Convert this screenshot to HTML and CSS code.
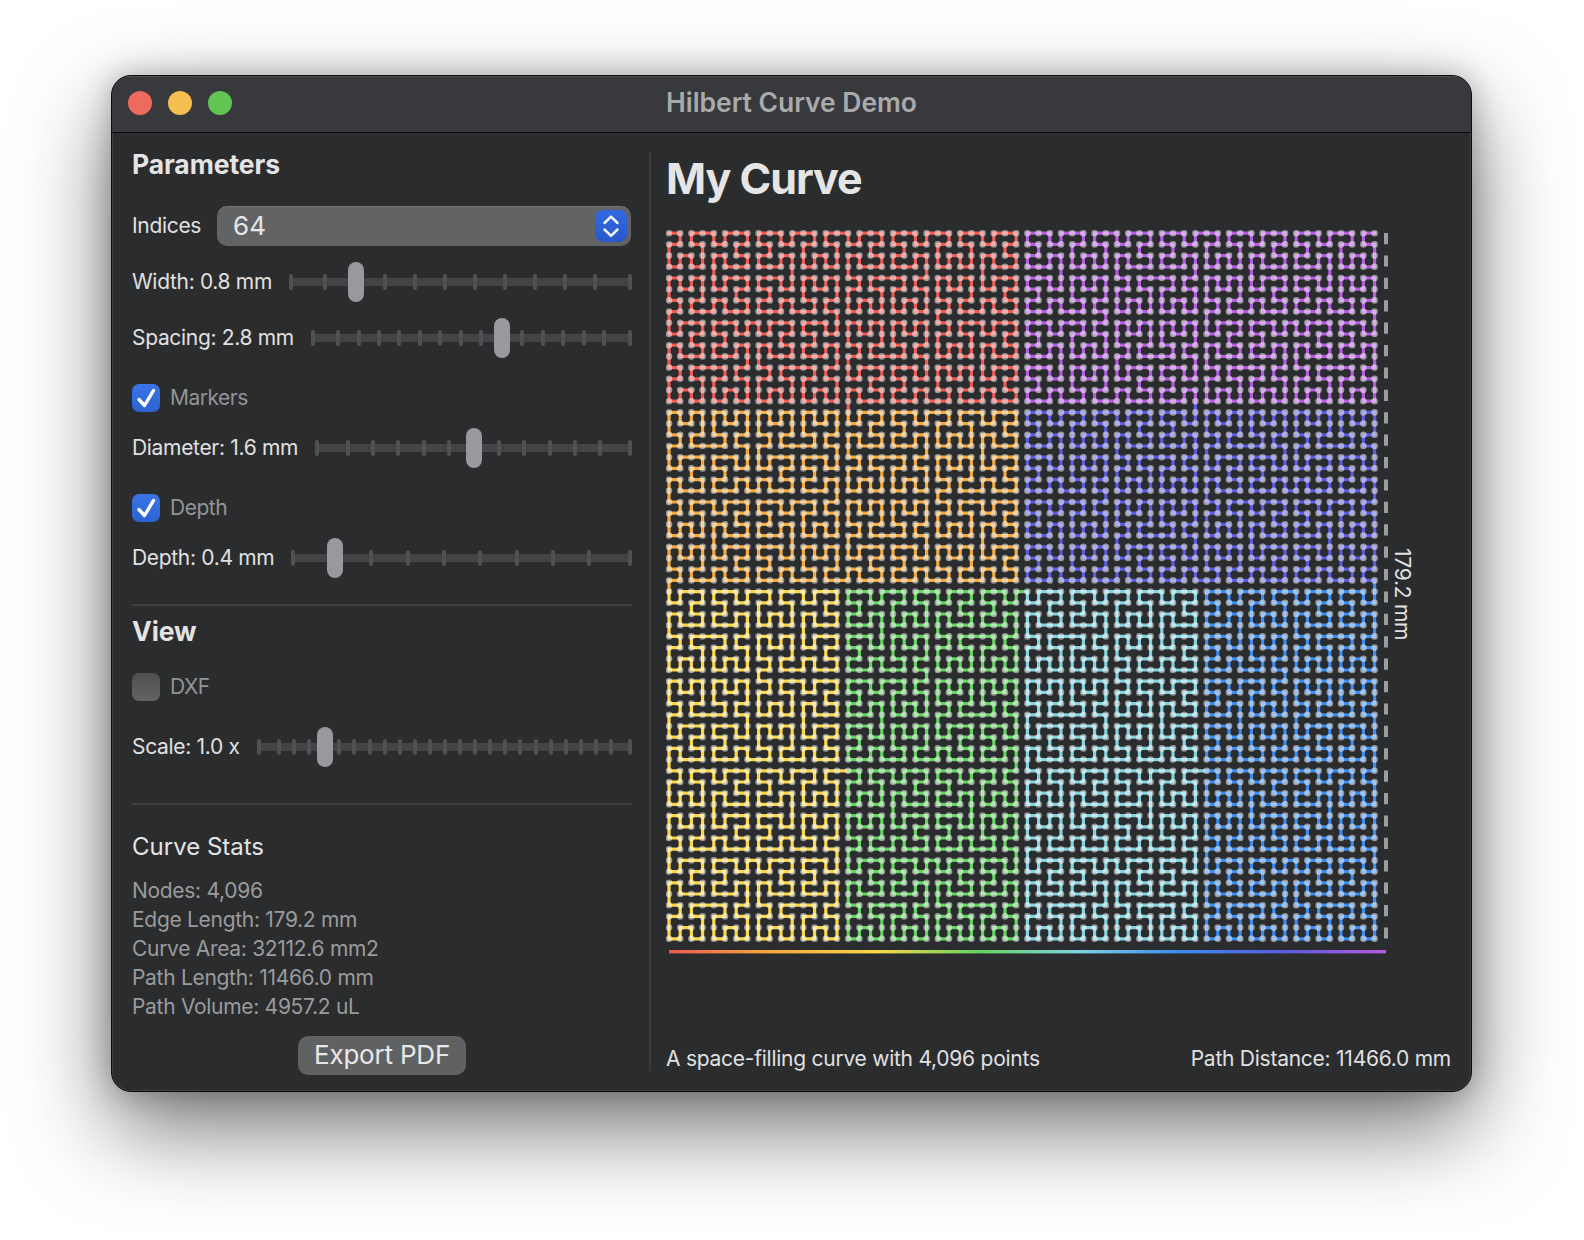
FILE: index.html
```html
<!DOCTYPE html>
<html lang="en">
<head>
<meta charset="utf-8">
<title>Hilbert Curve Demo</title>
<link rel="stylesheet" href="styles.css">
</head>
<body>
<main class="window">
  <header class="titlebar">
    <div class="lights"><span class="light red"></span><span class="light yellow"></span><span class="light green"></span></div>
    <h1 class="wintitle">Hilbert Curve Demo</h1>
  </header>
  <div class="body">
    <aside class="panel">
      <h2 class="heading">Parameters</h2>
      <div class="row select-row">
        <span class="label">Indices</span>
        <div class="select"><span class="select-value">64</span>
          <span class="stepper"><svg width="20" height="28" viewBox="0 0 20 28"><path d="M3.5 11 10 4.7 16.5 11M3.5 17.5 10 23.8 16.5 17.5" fill="none" stroke="#f2f5fd" stroke-width="2.5" stroke-linecap="round" stroke-linejoin="round"/></svg></span>
        </div>
      </div>
      <div class="row gap16"><span class="label">Width: 0.8 mm</span><div class="slider" data-first="305" data-step="30" data-n="10" data-thumb="268"></div></div>
      <div class="row gap16"><span class="label">Spacing: 2.8 mm</span><div class="slider" data-first="292" data-step="20.46" data-n="14" data-thumb="122"></div></div>
      <label class="check gap26"><span class="box on"><svg width="28" height="28" viewBox="0 0 28 28"><path d="M7 15.5 12.5 21.5 21.5 6.5" fill="none" stroke="#fff" stroke-width="3.4" stroke-linecap="round" stroke-linejoin="round"/></svg></span><span class="check-text">Markers</span></label>
      <div class="row gap16"><span class="label">Diameter: 1.6 mm</span><div class="slider" data-first="282" data-step="25.2" data-n="11" data-thumb="150"></div></div>
      <label class="check gap26"><span class="box on"><svg width="28" height="28" viewBox="0 0 28 28"><path d="M7 15.5 12.5 21.5 21.5 6.5" fill="none" stroke="#fff" stroke-width="3.4" stroke-linecap="round" stroke-linejoin="round"/></svg></span><span class="check-text">Depth</span></label>
      <div class="row gap16"><span class="label">Depth: 0.4 mm</span><div class="slider" data-first="295" data-step="36.3" data-n="8" data-thumb="289"></div></div>
      <hr class="rule rule-a">
      <h2 class="heading view-heading">View</h2>
      <label class="check gap25"><span class="box"></span><span class="check-text">DXF</span></label>
      <div class="row gap26b"><span class="label">Scale: 1.0 x</span><div class="slider" data-first="351" data-step="15.09" data-n="23" data-thumb="299"></div></div>
      <hr class="rule rule-b">
      <h3 class="subheading">Curve Stats</h3>
      <ul class="stats">
        <li>Nodes: 4,096</li>
        <li>Edge Length: 179.2 mm</li>
        <li>Curve Area: 32112.6 mm2</li>
        <li>Path Length: 11466.0 mm</li>
        <li>Path Volume: 4957.2 uL</li>
      </ul>
      <button class="export" type="button">Export PDF</button>
    </aside>
    <div class="vdivider"></div>
    <section class="content">
      <h2 class="curve-title">My Curve</h2>
      <div class="plot">
        <svg id="curve" class="curve" width="730" height="736" viewBox="0 0 730 736" aria-label="Hilbert curve">
          <defs>
            <linearGradient id="rainbow" x1="0" x2="1" y1="0" y2="0">
              <stop offset="0" stop-color="#ee5a52"/>
              <stop offset=".14" stop-color="#f5a93d"/>
              <stop offset=".29" stop-color="#fdd648"/>
              <stop offset=".43" stop-color="#63d45f"/>
              <stop offset=".57" stop-color="#7fd4e0"/>
              <stop offset=".71" stop-color="#3b8bf0"/>
              <stop offset=".86" stop-color="#5b5bdf"/>
              <stop offset="1" stop-color="#b45be0"/>
            </linearGradient>
          </defs>
          <line class="dash" x1="720" y1="8" x2="720" y2="722"/>
          <rect x="3" y="725" width="717" height="3.4" fill="url(#rainbow)"/>
        </svg>
        <span class="edge-label">179.2 mm</span>
      </div>
      <footer class="foot"><span>A space-filling curve with 4,096 points</span><span>Path Distance: 11466.0 mm</span></footer>
    </section>
  </div>
</main>
<script src="app.js"></script>
</body>
</html>
```
FILE: styles.css
```css
* { box-sizing: border-box; }
html, body { margin: 0; height: 100%; }
body {
  background: #fff;
  padding: 75px 0 0 111px;
  font-family: Inter, "Noto Sans", "Liberation Sans", sans-serif;
  font-size: 21px;
  color: #e2e2e3;
  overflow: hidden;
}
h1, h2, h3, ul { margin: 0; padding: 0; }
.window {
  width: 1361px;
  height: 1017px;
  border: 1px solid #0c0c0d;
  border-radius: 20px;
  background: #2b2c2e;
  box-shadow: inset 0 0 0 1px rgba(255,255,255,.1), 0 36px 90px rgba(0,0,0,.55), 0 0 30px rgba(0,0,0,.25);
  display: flex;
  flex-direction: column;
  overflow: hidden;
}
.titlebar {
  position: relative;
  height: 57px;
  flex: none;
  background: #38393c;
  border-bottom: 1px solid #0c0c0d;
  display: flex;
  align-items: center;
  justify-content: center;
  box-shadow: inset 0 1px 0 rgba(255,255,255,.12);
}
.lights { position: absolute; left: 16px; top: 15px; display: flex; gap: 16px; }
.light { width: 24px; height: 24px; border-radius: 50%; }
.red { background: #ec6a5e; }
.yellow { background: #f4bf4f; }
.green { background: #61c554; }
.wintitle { font-size: 26.5px; font-weight: 600; color: #a9aaac; letter-spacing: -.05px; line-height: 32px; padding-bottom: 4px; }
.body { flex: 1; display: flex; min-height: 0; }
.panel {
  width: 537px;
  flex: none;
  padding: 16px 17px 0 20px;
  display: flex;
  flex-direction: column;
}
.heading { font-size: 26.5px; font-weight: 700; line-height: 31px; color: #e4e4e5; letter-spacing: -.1px; }
.row { display: flex; align-items: center; height: 40px; gap: 17px; }
.select-row { margin-top: 26px; gap: 16px; }
.gap16 { margin-top: 16px; }
.gap26 { margin-top: 26px; }
.gap25 { margin-top: 26px; }
.gap26b { margin-top: 26px; }
.label { white-space: nowrap; color: #e0e0e1; flex: none; letter-spacing: -.32px; padding-bottom: 2px; }
.select {
  flex: 1;
  height: 40px;
  margin-right: 1px;
  border-radius: 10px;
  background: #626365;
  box-shadow: inset 0 1px 0 rgba(255,255,255,.12);
  display: flex;
  align-items: center;
  justify-content: space-between;
  padding: 0 4px 0 16px;
  font-size: 26px;
  color: #e6e6e7;
}
.select-value { padding-bottom: 2px; }
.stepper {
  width: 32px;
  height: 32px;
  border-radius: 8px;
  background: linear-gradient(#3269e2, #2958cc);
  display: flex;
  align-items: center;
  justify-content: center;
}
.slider { position: relative; flex: 1; height: 40px; }
.slider::before {
  content: "";
  position: absolute;
  left: 0; right: 0; top: 16px;
  height: 8px;
  background: #434446;
}
.tick {
  position: absolute;
  top: 12px;
  width: 4px;
  height: 16px;
  border-radius: 2px;
  background: #505153;
}
.tick.start { left: 0; }
.tick.end { right: 0; }
.thumb {
  position: absolute;
  top: 0;
  width: 16px;
  height: 40px;
  border-radius: 8px;
  background: #98999c;
}
.check { display: flex; align-items: center; gap: 10px; height: 28px; color: #939496; }
.check-text { letter-spacing: -.5px; padding-bottom: 2px; }
.box {
  width: 28px;
  height: 28px;
  border-radius: 7px;
  background: linear-gradient(#4f5052, #626365);
  display: block;
}
.box.on { background: linear-gradient(#3a74e6, #2c63d2); }
.box svg { display: block; }
.rule { border: 0; height: 2px; background: #3e3f41; margin: 0; flex: none; }
.rule-a { margin-top: 26px; }
.rule-b { margin-top: 36px; }
.view-heading { margin-top: 10px; }
.subheading { font-size: 24px; font-weight: 400; line-height: 32px; margin-top: 26px; color: #e4e4e5; }
.stats { list-style: none; margin-top: 13px; color: #9a9b9d; line-height: 29px; letter-spacing: -.3px; }
.export {
  align-self: center;
  margin-top: 15px;
  width: 168px;
  height: 39px;
  border: 0;
  border-radius: 10px;
  background: #606163;
  color: #e8e8e9;
  font: 400 26px/37px Inter, "Noto Sans", sans-serif;
  letter-spacing: -.2px;
  padding: 0 0 2px;
}
.vdivider { width: 2px; flex: none; margin: 19px 0 20px; background: #3c3d3f; }
.content {
  flex: 1;
  min-width: 0;
  padding: 19px 20px 18px 15px;
  display: flex;
  flex-direction: column;
}
.curve-title { font-size: 43px; font-weight: 700; line-height: 52px; color: #e5e5e6; letter-spacing: -1.05px; }
.plot { position: relative; margin-top: 21px; }
.curve { display: block; }
.dash { stroke: #9c9d9f; stroke-width: 4; stroke-dasharray: 11.2 11.2; }
.seg { fill: none; stroke-width: 3.2; stroke-linejoin: miter; stroke-linecap: square; }
.dots { fill: none; stroke: rgba(255,255,255,.5); stroke-width: 6.6; stroke-linecap: round; }
.edge-label {
  position: absolute;
  left: 723px;
  top: 323px;
  writing-mode: vertical-rl;
  line-height: 26px;
  color: #e0e0e1;
  letter-spacing: -.25px;
  white-space: nowrap;
}
.foot {
  margin-top: auto;
  display: flex;
  justify-content: space-between;
  line-height: 28px;
  color: #e0e0e1;
  letter-spacing: -.25px;
}
```
FILE: app.js
```js
// Hilbert curve of 4096 points, drawn in eight coloured runs of 512 points.
var N = 64, STEP = 11.2, X0 = 3, Y0 = 8.2;
var COLORS = ['#ee5a52', '#f5a93d', '#fdd648', '#63d45f', '#82d2e0', '#3b8bf0', '#5b5bdf', '#b45be0'];
var SVGNS = 'http://www.w3.org/2000/svg';

function d2xy(n, d) {
  var x = 0, y = 0, t = d;
  for (var s = 1; s < n; s *= 2) {
    var rx = 1 & (t / 2);
    var ry = 1 & (t ^ rx);
    if (ry === 0) {
      if (rx === 1) { x = s - 1 - x; y = s - 1 - y; }
      var tmp = x; x = y; y = tmp;
    }
    x += s * rx;
    y += s * ry;
    t = Math.floor(t / 4);
  }
  return [X0 + x * STEP, Y0 + y * STEP];
}

var svg = document.getElementById('curve');
function addPath(cls, d, stroke) {
  var p = document.createElementNS(SVGNS, 'path');
  p.setAttribute('class', cls);
  p.setAttribute('d', d);
  if (stroke) p.setAttribute('stroke', stroke);
  svg.appendChild(p);
}
COLORS.forEach(function (c, i) {
  var parts = [];
  var end = Math.min(4095, (i + 1) * 512);
  for (var d = i * 512; d <= end; d++) {
    var q = d2xy(N, d);
    parts.push((parts.length ? 'L' : 'M') + q[0].toFixed(2) + ' ' + q[1].toFixed(2));
  }
  addPath('seg', parts.join(''), c);
});
var dots = [];
for (var d = 0; d < 4096; d++) {
  var q = d2xy(N, d);
  dots.push('M' + q[0].toFixed(2) + ' ' + q[1].toFixed(2) + 'h.01');
}
addPath('dots', dots.join(''));

document.querySelectorAll('.slider').forEach(function (el) {
  var html = '<i class="tick start"></i><i class="tick end"></i>';
  var first = +el.dataset.first, step = +el.dataset.step, n = +el.dataset.n;
  for (var i = 0; i < n; i++) {
    html += '<i class="tick" style="right:' + (first - i * step).toFixed(1) + 'px"></i>';
  }
  html += '<i class="thumb" style="right:' + el.dataset.thumb + 'px"></i>';
  el.innerHTML = html;
});
```
